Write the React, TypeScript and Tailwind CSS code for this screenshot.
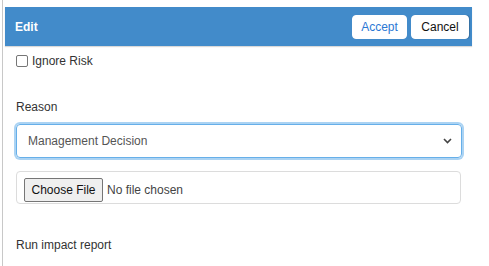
import React from "react";

export default function App() {
  return (
    <div className="w-[489px] h-[266px] bg-white overflow-hidden font-['Liberation_Sans',Arial,sans-serif] text-[12px] text-[#333]">
      <div className="ml-[2px] h-full border-l border-[#c8c8c8] pl-[2px] pt-[7px]">
        <div className="w-[467px] h-[39px] bg-[#428bca] flex items-center justify-between pl-[10px] pr-[3px] shadow-[0_1px_1px_rgba(0,0,0,0.15)]">
          <span className="font-bold text-white text-[12px]">Edit</span>
          <div className="flex gap-[4px]">
            <button className="h-[24px] w-[55px] bg-white rounded-[4px] text-[#2b78d4] text-[12px] border border-white">
              Accept
            </button>
            <button className="h-[24px] w-[58px] bg-white rounded-[4px] text-[#111] text-[12px] border border-white shadow-[1px_0_1px_rgba(0,0,0,0.2)]">
              Cancel
            </button>
          </div>
        </div>

        <div className="pl-[11px] pr-[10px]">
          <div className="flex items-center mt-[9px] h-[12px]">
            <span className="w-[12px] h-[12px] border border-[#767676] rounded-[2px] bg-white" />
            <span className="ml-[4px] leading-[12px]">Ignore Risk</span>
          </div>

          <div className="mt-[33px] leading-[14px]">Reason</div>

          <div className="mt-[10px] w-[446px] h-[34px] border border-[#66afe9] rounded-[4px] shadow-[0_0_0_2px_rgba(102,175,233,0.55)] flex items-center justify-between pl-[11px] pr-[9px] text-[#555]">
            <span>Management Decision</span>
            <svg width="9" height="6" viewBox="0 0 9 6">
              <path d="M1 1 L4.5 4.5 L8 1" fill="none" stroke="#444" strokeWidth="1.6" />
            </svg>
          </div>

          <div className="mt-[13px] w-[445px] h-[33px] border border-[#dcdcdc] rounded-[4px] flex items-start pl-[7px] pt-[6px]">
            <span className="h-[24px] w-[79px] border border-[#767676] rounded-[2px] bg-[#efefef] flex items-center justify-center text-[#111]">
              Choose File
            </span>
            <span className="ml-[4px] text-[#444] h-[24px] flex items-center">No file chosen</span>
          </div>

          <div className="mt-[34px] leading-[14px]">Run impact report</div>
        </div>
      </div>
    </div>
  );
}
